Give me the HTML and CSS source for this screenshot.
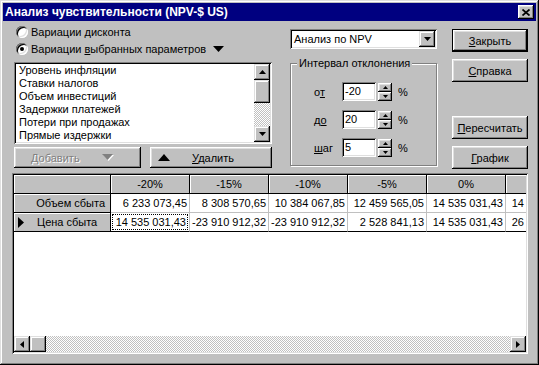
FILE: index.html
```html
<!DOCTYPE html>
<html lang="ru">

<head>
    <meta charset="UTF-8">
    <meta name="viewport" content="width=device-width, initial-scale=1.0">
    <title>Анализ чувствительности</title>
    <link rel="stylesheet" href="styles.css">
</head>

<body>
    <div class="window">
        <div class="titlebar">
            <span class="title">Анализ чувствительности (NPV-$ US)</span>
            <span class="close-btn">
                <svg width="8" height="7" viewBox="0 0 8 7"><path d="M0.5 0.5L7.5 6.5M7.5 0.5L0.5 6.5" stroke="#000" stroke-width="1.7"/></svg>
            </span>
        </div>

        <div class="client">
            <div class="top">
                <div class="col-left">
                    <div class="radio"><span class="radio-dot"></span><span>Вариации <u>д</u>исконта</span></div>
                    <div class="radio"><span class="radio-dot checked"></span><span>Вариации <u>в</u>ыбранных параметров</span>
                        <svg class="menu-tri" width="11" height="6" viewBox="0 0 11 6"><path d="M0 0H11L5.5 6z" fill="#000"/></svg>
                    </div>

                    <div class="listbox">
                        <ul class="items">
                            <li>Уровень инфляции</li>
                            <li>Ставки налогов</li>
                            <li>Объем инвестиций</li>
                            <li>Задержки платежей</li>
                            <li>Потери при продажах</li>
                            <li>Прямые издержки</li>
                        </ul>
                        <div class="vscroll">
                            <span class="sb-btn"><svg width="7" height="4" viewBox="0 0 7 4"><path d="M3.5 0L7 4H0z" fill="#000"/></svg></span>
                            <span class="sb-thumb"></span>
                            <span class="sb-track"></span>
                            <span class="sb-btn"><svg width="7" height="4" viewBox="0 0 7 4"><path d="M0 0H7L3.5 4z" fill="#000"/></svg></span>
                        </div>
                    </div>

                    <div class="list-buttons">
                        <span class="btn btn-add disabled"><span><u>Д</u>обавить</span>
                            <svg width="12" height="7" viewBox="0 0 12 7"><path d="M1 1H12L6.5 7z" fill="#fff"/><path d="M0 0H11L5.5 6z" fill="#808080"/></svg>
                        </span>
                        <span class="btn btn-del">
                            <svg width="12" height="7" viewBox="0 0 12 7"><path d="M6 0L12 7H0z" fill="#000"/></svg>
                            <span><u>У</u>далить</span>
                        </span>
                    </div>
                </div>

                <div class="col-mid">
                    <div class="combo">
                        <span class="combo-text">Анализ по NPV</span>
                        <span class="sb-btn"><svg width="7" height="4" viewBox="0 0 7 4"><path d="M0 0H7L3.5 4z" fill="#000"/></svg></span>
                    </div>

                    <div class="group">
                        <span class="group-title">Интервал отклонения</span>
                        <div class="field-row">
                            <span class="field-label">о<u>т</u></span>
                            <span class="edit">-20</span>
                            <span class="spin">
                                <span class="spin-btn"><svg width="5" height="3" viewBox="0 0 5 3"><path d="M2.5 0L5 3H0z" fill="#000"/></svg></span>
                                <span class="spin-btn"><svg width="5" height="3" viewBox="0 0 5 3"><path d="M0 0H5L2.5 3z" fill="#000"/></svg></span>
                            </span>
                            <span class="pct">%</span>
                        </div>
                        <div class="field-row">
                            <span class="field-label">д<u>о</u></span>
                            <span class="edit">20</span>
                            <span class="spin">
                                <span class="spin-btn"><svg width="5" height="3" viewBox="0 0 5 3"><path d="M2.5 0L5 3H0z" fill="#000"/></svg></span>
                                <span class="spin-btn"><svg width="5" height="3" viewBox="0 0 5 3"><path d="M0 0H5L2.5 3z" fill="#000"/></svg></span>
                            </span>
                            <span class="pct">%</span>
                        </div>
                        <div class="field-row row-step">
                            <span class="field-label"><u>ш</u>аг</span>
                            <span class="edit">5</span>
                            <span class="spin">
                                <span class="spin-btn"><svg width="5" height="3" viewBox="0 0 5 3"><path d="M2.5 0L5 3H0z" fill="#000"/></svg></span>
                                <span class="spin-btn"><svg width="5" height="3" viewBox="0 0 5 3"><path d="M0 0H5L2.5 3z" fill="#000"/></svg></span>
                            </span>
                            <span class="pct">%</span>
                        </div>
                    </div>
                </div>

                <div class="col-right">
                    <span class="btn btn-side btn-default"><span><u>З</u>акрыть</span></span>
                    <span class="btn btn-side"><span><u>С</u>правка</span></span>
                    <span class="btn btn-side btn-recalc"><span><u>П</u>ересчитать</span></span>
                    <span class="btn btn-side"><span><u>Г</u>рафик</span></span>
                </div>
            </div>

            <div class="grid">
                <div class="cells">
                    <div class="cell fixed"></div>
                    <div class="cell fixed head">-20%</div>
                    <div class="cell fixed head">-15%</div>
                    <div class="cell fixed head">-10%</div>
                    <div class="cell fixed head">-5%</div>
                    <div class="cell fixed head">0%</div>
                    <div class="cell fixed head">5%</div>

                    <div class="cell fixed row-name">Объем сбыта</div>
                    <div class="cell num">6 233 073,45</div>
                    <div class="cell num">8 308 570,65</div>
                    <div class="cell num">10 384 067,85</div>
                    <div class="cell num">12 459 565,05</div>
                    <div class="cell num">14 535 031,43</div>
                    <div class="cell num">14 535 031,43</div>

                    <div class="cell fixed row-name current">
                        <svg width="6" height="11" viewBox="0 0 6 11"><path d="M0 0L6 5.5L0 11z" fill="#000"/></svg>
                        <span>Цена сбыта</span>
                    </div>
                    <div class="cell num last focus"><span>14 535 031,43</span></div>
                    <div class="cell num last">-23 910 912,32</div>
                    <div class="cell num last">-23 910 912,32</div>
                    <div class="cell num last">2 528 841,13</div>
                    <div class="cell num last">14 535 031,43</div>
                    <div class="cell num last">26 141 221,73</div>
                </div>
                <div class="hscroll">
                    <span class="sb-btn"><svg width="4" height="7" viewBox="0 0 4 7"><path d="M4 0V7L0 3.5z" fill="#000"/></svg></span>
                    <span class="sb-thumb"></span>
                    <span class="sb-track"></span>
                    <span class="sb-btn"><svg width="4" height="7" viewBox="0 0 4 7"><path d="M0 0V7L4 3.5z" fill="#000"/></svg></span>
                </div>
            </div>
        </div>
    </div>
</body>

</html>
```

FILE: styles.css
```css
body {
    margin: 0;
    font-family: "Liberation Sans", Arial, sans-serif;
    font-size: 11px;
    color: #000000;
}

.window {
    width: 539px;
    height: 365px;
    box-sizing: border-box;
    padding: 3px;
    background-color: #c0c0c0;
    display: flex;
    flex-direction: column;
    box-shadow: inset -1px -1px #000000, inset 1px 1px #dfdfdf,
        inset -2px -2px #808080, inset 2px 2px #ffffff;
}

.titlebar {
    height: 18px;
    padding: 0 2px;
    background-color: #000080;
    color: #ffffff;
    display: flex;
    align-items: center;
    justify-content: space-between;
}

.title {
    font-weight: bold;
    font-size: 12px;
}

.close-btn {
    width: 16px;
    height: 14px;
    display: flex;
    align-items: center;
    justify-content: center;
    background-color: #c0c0c0;
    box-shadow: inset -1px -1px #000000, inset 1px 1px #ffffff,
        inset -2px -2px #808080, inset 2px 2px #dfdfdf;
}

.client {
    flex: 1;
    padding: 0 8px 0 9px;
    display: flex;
    flex-direction: column;
}

.top {
    display: flex;
    align-items: flex-start;
}

/* левая колонка */

.col-left {
    width: 258px;
    margin-left: 2px;
    padding-top: 2px;
}

.radio {
    height: 17px;
    padding-left: 2px;
    display: flex;
    align-items: center;
    white-space: nowrap;
}

.radio-dot {
    position: relative;
    width: 12px;
    height: 12px;
    margin-right: 3px;
    border-radius: 50%;
    background-color: #ffffff;
    box-shadow: inset 1px 1px #808080, inset -1px -1px #ffffff,
        inset 2px 2px #000000, inset -2px -2px #dfdfdf;
}

.radio-dot.checked::after {
    content: "";
    position: absolute;
    left: 4px;
    top: 4px;
    width: 4px;
    height: 4px;
    border-radius: 50%;
    background-color: #000000;
}

.menu-tri {
    margin-left: 7px;
}

.listbox {
    height: 82px;
    margin-top: 5px;
    box-sizing: border-box;
    padding: 2px;
    background-color: #ffffff;
    display: flex;
    box-shadow: inset 1px 1px #808080, inset -1px -1px #ffffff,
        inset 2px 2px #000000, inset -2px -2px #dfdfdf;
}

.items {
    flex: 1;
    margin: 0;
    padding: 0 0 0 3px;
    list-style: none;
    overflow: hidden;
}

.items li {
    height: 13px;
    line-height: 13px;
    white-space: nowrap;
}

.vscroll {
    width: 16px;
    display: flex;
    flex-direction: column;
}

.sb-btn {
    width: 16px;
    height: 16px;
    flex: none;
    display: flex;
    align-items: center;
    justify-content: center;
    background-color: #c0c0c0;
    box-shadow: inset -1px -1px #000000, inset 1px 1px #dfdfdf,
        inset -2px -2px #808080, inset 2px 2px #ffffff;
}

.sb-thumb {
    flex: none;
    width: 16px;
    height: 23px;
    background-color: #c0c0c0;
    box-shadow: inset -1px -1px #000000, inset 1px 1px #dfdfdf,
        inset -2px -2px #808080, inset 2px 2px #ffffff;
}

.sb-track {
    flex: 1;
    background: repeating-conic-gradient(#ffffff 0 25%, #c0c0c0 0 50%) 0 0 / 2px 2px;
}

.list-buttons {
    margin-top: 3px;
    display: flex;
    gap: 9px;
}

.btn {
    height: 21px;
    box-sizing: border-box;
    display: flex;
    align-items: center;
    justify-content: center;
    background-color: #c0c0c0;
    white-space: nowrap;
    box-shadow: inset -1px -1px #000000, inset 1px 1px #ffffff,
        inset -2px -2px #808080, inset 2px 2px #dfdfdf;
}

.btn-add {
    width: 127px;
    justify-content: flex-start;
    padding-left: 17px;
    gap: 22px;
}

.btn-del {
    flex: 1;
    justify-content: flex-start;
    padding-left: 8px;
    gap: 22px;
}

.disabled {
    color: #808080;
    text-shadow: 1px 1px #ffffff;
}

/* средняя колонка */

.col-mid {
    width: 147px;
    margin-left: 18px;
}

.combo {
    height: 20px;
    margin-top: 8px;
    box-sizing: border-box;
    padding: 2px;
    background-color: #ffffff;
    display: flex;
    align-items: center;
    box-shadow: inset 1px 1px #808080, inset -1px -1px #ffffff,
        inset 2px 2px #000000, inset -2px -2px #dfdfdf;
}

.combo-text {
    flex: 1;
    padding-left: 2px;
}

.group {
    position: relative;
    height: 103px;
    margin-top: 14px;
    box-sizing: border-box;
    padding-top: 18px;
    border: 1px solid #808080;
    box-shadow: inset 1px 1px #ffffff, 1px 1px #ffffff;
}

.group-title {
    position: absolute;
    left: 6px;
    top: -7px;
    padding: 0 2px;
    background-color: #c0c0c0;
    line-height: 13px;
}

.field-row {
    height: 19px;
    margin-bottom: 9px;
    display: flex;
    align-items: center;
}

.row-step {
    margin-top: 1px;
}

.field-label {
    width: 28px;
    margin-left: 23px;
}

.edit {
    width: 34px;
    height: 19px;
    box-sizing: border-box;
    padding: 2px 3px;
    background-color: #ffffff;
    line-height: 15px;
    box-shadow: inset 1px 1px #808080, inset -1px -1px #ffffff,
        inset 2px 2px #000000, inset -2px -2px #dfdfdf;
}

.spin {
    width: 14px;
    height: 18px;
    margin-left: 2px;
    display: flex;
    flex-direction: column;
}

.spin-btn {
    flex: 1;
    display: flex;
    align-items: center;
    justify-content: center;
    background-color: #c0c0c0;
    box-shadow: inset -1px -1px #000000, inset 1px 1px #ffffff,
        inset -2px -2px #808080, inset 2px 2px #dfdfdf;
}

.pct {
    margin-left: 6px;
}

/* правая колонка */

.col-right {
    width: 76px;
    margin-left: 15px;
    display: flex;
    flex-direction: column;
}

.btn-side {
    height: 23px;
    margin-top: 7px;
}

.btn-default {
    margin-top: 8px;
    box-shadow: inset 1px 1px #000000, inset -1px -1px #000000,
        inset -2px -2px #000000, inset 2px 2px #ffffff,
        inset -3px -3px #808080, inset 3px 3px #dfdfdf;
}

.btn-recalc {
    margin-top: 34px;
}

/* таблица */

.grid {
    height: 181px;
    margin-top: 4px;
    box-sizing: border-box;
    padding: 2px;
    background-color: #ffffff;
    display: flex;
    flex-direction: column;
    box-shadow: inset 1px 1px #808080, inset -1px -1px #ffffff,
        inset 2px 2px #000000, inset -2px -2px #dfdfdf;
}

.cells {
    flex: 1;
    overflow: hidden;
    display: grid;
    grid-template-columns: 97px repeat(6, 79px);
    grid-auto-rows: 19px;
    align-content: start;
}

.cell {
    box-sizing: border-box;
    border-right: 1px solid #c0c0c0;
    border-bottom: 1px solid #c0c0c0;
    display: flex;
    align-items: center;
    white-space: nowrap;
    overflow: hidden;
}

.fixed {
    background-color: #c0c0c0;
    border-color: #000000;
    box-shadow: inset 1px 1px #ffffff;
}

.head {
    justify-content: center;
}

.row-name {
    justify-content: flex-end;
    padding-right: 5px;
}

.row-name.current {
    justify-content: flex-start;
    padding-left: 4px;
    gap: 13px;
}

.num {
    justify-content: flex-end;
    padding-right: 2px;
}

.last {
    border-bottom-color: #000000;
}

.focus {
    padding: 1px;
}

.focus span {
    flex: 1;
    height: 100%;
    box-sizing: border-box;
    border: 1px dotted #000000;
    text-align: right;
    line-height: 15px;
    padding-right: 1px;
}

.hscroll {
    height: 16px;
    display: flex;
}

.hscroll .sb-thumb {
    width: 16px;
    height: 16px;
}
```
